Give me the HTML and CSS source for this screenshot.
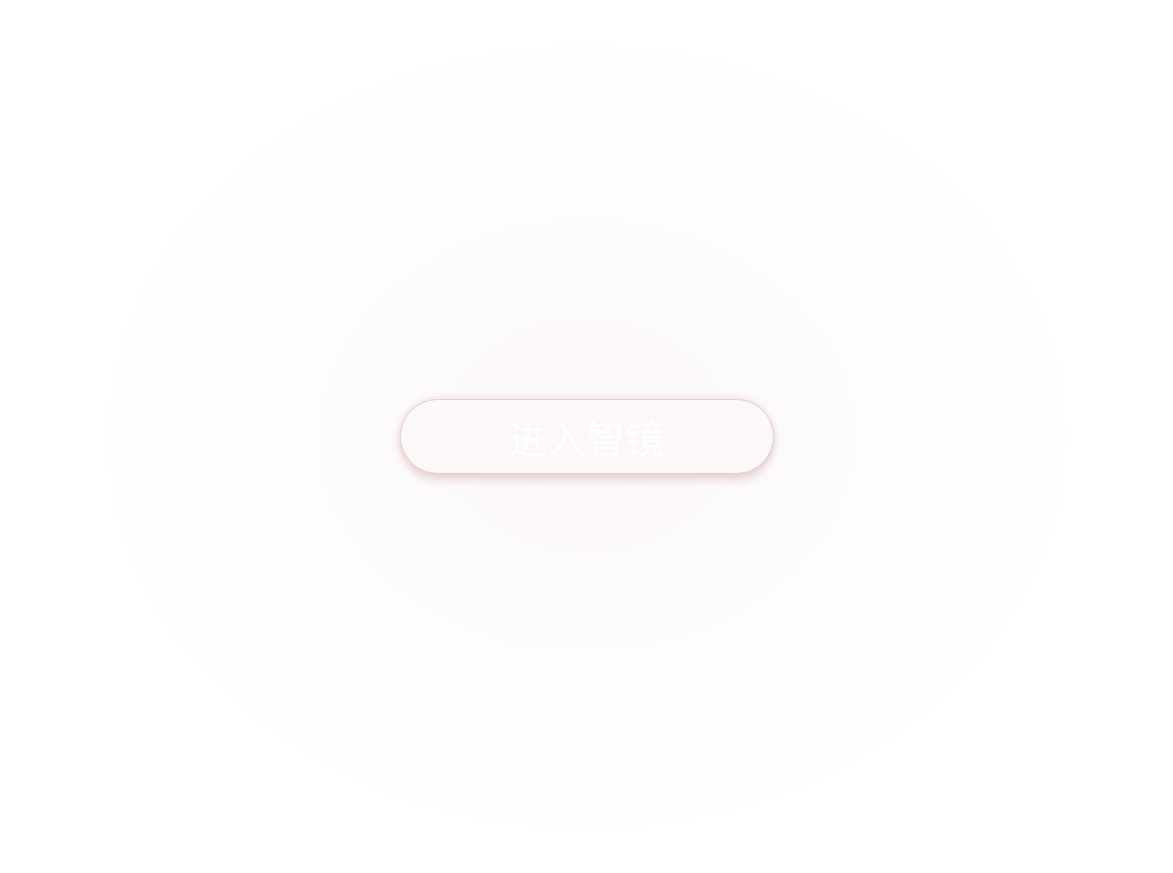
FILE: index.html
```html
<!DOCTYPE html>
<html lang="zh-CN">
<head>
    <meta charset="UTF-8">
    <meta name="viewport" content="width=device-width, initial-scale=1.0">
    <title>进入智镜</title>
    <link rel="stylesheet" href="styles.css">
</head>
<body>
    <div class="stage">
        <button class="enter-button">进入智镜</button>
    </div>
</body>
</html>
```

FILE: styles.css
```css
html, body {
    margin: 0;
    padding: 0;
    height: 100%;
}
body {
    font-family: "Noto Sans CJK SC", "Noto Sans", sans-serif;
    background-color: #ffffff;
}
.stage {
    height: 100vh;
    display: flex;
    align-items: center;
    justify-content: center;
    background: radial-gradient(ellipse 490px 400px at 50% 50%, rgba(248, 238, 240, 0.5) 0%, rgba(250, 243, 244, 0.3) 50%, rgba(255, 255, 255, 0) 100%);
}
.enter-button {
    width: 374px;
    height: 75px;
    border-radius: 38px;
    border: 1px solid #e9cdd0;
    background-color: #fcf8f8;
    color: #ffffff;
    font-family: inherit;
    font-size: 38px;
    font-weight: 400;
    letter-spacing: 1px;
    box-shadow: 0 6px 9px rgba(205, 160, 166, 0.4), 0 -1px 6px rgba(225, 185, 190, 0.35);
    cursor: pointer;
}
```
